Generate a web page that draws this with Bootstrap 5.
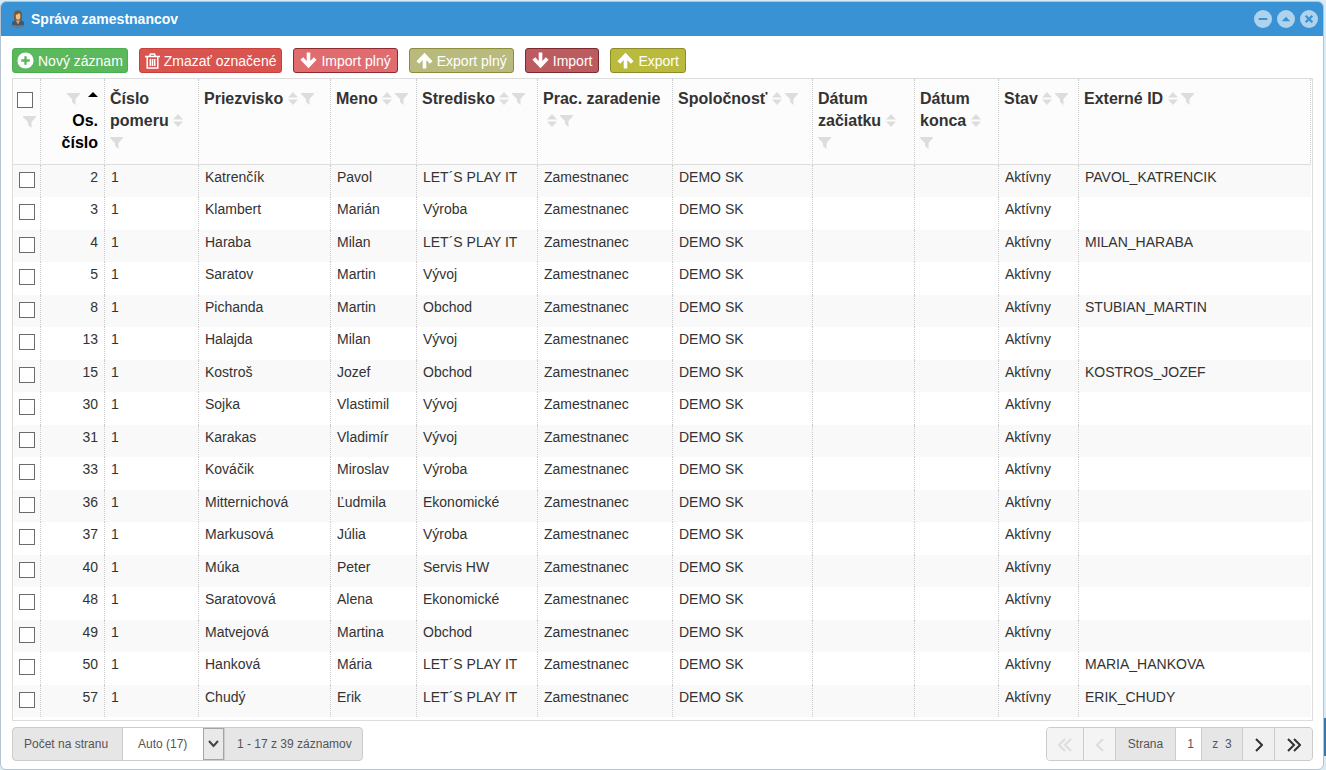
<!DOCTYPE html>
<html lang="sk">
<head>
<meta charset="utf-8">
<meta name="viewport" content="width=device-width, initial-scale=1">
<title>Správa zamestnancov</title>
<link href="https://cdn.jsdelivr.net/npm/bootstrap@5.3.0/dist/css/bootstrap.min.css" rel="stylesheet">
<style>
  body { font-family: "Liberation Sans", Arial, sans-serif; font-size: 14px; color: #333; background: #d8ecf5; }
  .desktop { min-height: 100vh; padding-top: 1px; }
  .desktop::after { content: ""; position: absolute; right: 0; bottom: 14px; width: 2px; height: 38px; background: #3a78a8; }
  .panel { border: 1px solid #b4c4d0; border-radius: 6px; background: #fff; margin: 0 2px 0 0; min-height: calc(100vh - 1px); overflow: hidden; }
  .titlebar { background: #3892d3; color: #fff; height: 34px; padding: 0 5px 0 10px; }
  .titlebar h1 { font-size: 14px; line-height: 20px; font-weight: 700; margin: 0 0 0 6px; }
  .win-btns { gap: 5px; }
  .win-btn { border: 0; padding: 0; background: none; line-height: 0; }
  .toolbar { padding: 12px 10px 5px 11px; gap: 11px; }
  .tool { display: inline-flex; align-items: center; gap: 4px; height: 25px; padding: 0 6px; border: 1px solid; border-radius: 3px; color: #fff; font-size: 14px; line-height: 20px; white-space: nowrap; }
  .t-new { background: #5cb85c; border-color: #4cae4c; padding: 0 4px; }
  .t-del { background: #d9534f; border-color: #c9403b; padding: 0 5px; }
  .t-impf { background: #e06c70; border-color: #8c2a2e; }
  .t-expf { background: #b9ba7d; border-color: #8c8c3c; }
  .t-imp { background: #bd5c60; border-color: #7c2a2e; }
  .t-exp { background: #babb3c; border-color: #8c8c2c; }
  .grid-box { margin: 0 10px 0 11px; border: 1px solid #ddd; padding: 0 1px 3px 0; }
  .grid { table-layout: fixed; width: 100%; border-collapse: separate; border-spacing: 0; }
  .grid th { font-size: 16px; line-height: 22px; height: 86px; padding: 9px 4px 0 5px; vertical-align: top; background: #fcfcfc; border-right: 1px dotted #ccc; border-bottom: 1px solid #ddd; color: #333; }
  .grid td { padding: 3px 5px 0 6px; line-height: 18px; height: 33px; vertical-align: top; border-right: 1px dotted #ccc; white-space: nowrap; overflow: hidden; }
  .grid tr:nth-child(odd) td { background: #f9f9f9; height: 32px; }
  .grid td:last-child { border-right: 0; }
  .grid .num { text-align: right; padding-right: 6px; }
  .grid th.num { color: #000; }
  .grid th.sel { padding: 13px 4px 0; }
  .tick { appearance: none; display: block; width: 16px; height: 16px; margin: 4px 0 0; border: 1px solid #6b6b6b; background: #fff; }
  th .tick { margin: 0 0 6px; }
  .tick:checked { background: #3892d3; }
  .ico { fill: #ddd; vertical-align: -1px; }
  .ico + .ico { margin-left: 3px; }
  .pager { padding: 6px 10px 8px 11px; font-size: 12px; color: #555; }
  .seg { display: inline-flex; height: 34px; border: 1px solid #ccc; border-radius: 4px; overflow: hidden; background: #e6e6e6; }
  .seg > * { display: flex; align-items: center; border: 0; border-right: 1px solid #ccc; }
  .seg > :last-child { border-right: 0; }
  .lbl-size { padding: 0 13px 0 11px; width: 110px; white-space: nowrap; }
  .total { padding: 0 10px 0 12px; }
  .lbl-page { width: 60px; justify-content: center; }
  .of { width: 41px; justify-content: center; }
  .size { position: relative; background: #fff; }
  .size select { appearance: none; border: 0; background: transparent; color: #555; width: 101px; height: 32px; padding: 0 0 0 15px; font-size: 12px; }
  .drop { position: absolute; right: 0; top: 0; bottom: 0; width: 21px; border: 1px solid #a5a5a5; background: #e9e9e9; pointer-events: none; }
  .page-no { width: 26px; background: #fff; color: #555; text-align: right; padding: 0 7px 0 0; }
  .nav-b { width: 32px; background: #f0f0f0; justify-content: center; padding: 2px 0 0; }
  .nav-b.wide { width: 37px; }
  .nav-b:disabled { background: #f4f4f4; }
</style>
</head>
<body>
<svg width="0" height="0" class="position-absolute" aria-hidden="true">
  <symbol id="funnel" viewBox="0 0 13 12"><path d="M0 0h13v1L8.500 6v6L5 9V6L0 1z"/></symbol>
  <symbol id="sort" viewBox="0 0 10 13"><path d="M5 0l5 5.500H0zM0 7.500h10L5 13z"/></symbol>
  <symbol id="down" viewBox="0 0 16 16"><path d="M6.300 .5h3.400v8L13 5l2.600 2.400L8 15.200 .4 7.400 3 5l3.300 3.500z"/></symbol>
  <symbol id="up" viewBox="0 0 16 16"><path d="M6.300 15.500h3.400v-8L13 11l2.600-2.400L8 .8 .4 8.600 3 11l3.300-3.500z"/></symbol>
</svg>
<div class="desktop position-relative">
<main class="panel">
  <header class="titlebar d-flex align-items-center">
    <svg width="14" height="18" viewBox="0 0 14 18"><path d="M1 16v-3q0-2 3-3h6q3 1 3 3v3q-6 3-12 0z" fill="#3f5878"/><path d="M1.500 15.500q5.500 2 11 0" fill="none" stroke="#777f84" stroke-width="1.500"/><path d="M4.500 10h5L7 14.500z" fill="#e0a060"/><path d="M3 9V4.500Q3 .5 7 .5t4 4V9l-1.500 1.500h-5z" fill="#7b5835"/><path d="M4.800 4.500Q7 5 8 3l1.300 1.500v3Q9 9.800 7 9.800T4.800 7.500z" fill="#efc08c"/></svg>
    <h1 class="flex-grow-1">Správa zamestnancov</h1>
    <div class="win-btns d-flex">
      <button class="win-btn" aria-label="Minimalizovať"><svg width="18" height="18" viewBox="0 0 19 19"><circle cx="9.500" cy="9.500" r="9.500" fill="#afd3ed"/><path d="M5 9.500h9" stroke="#3892d3" stroke-width="2.200"/></svg></button>
      <button class="win-btn" aria-label="Zbaliť"><svg width="18" height="18" viewBox="0 0 19 19"><circle cx="9.500" cy="9.500" r="9.500" fill="#afd3ed"/><path d="M5 12l4.500-5 4.500 5z" fill="#3892d3"/></svg></button>
      <button class="win-btn" aria-label="Zavrieť"><svg width="18" height="18" viewBox="0 0 19 19"><circle cx="9.500" cy="9.500" r="9.500" fill="#afd3ed"/><path d="M6 6l7 7m0-7l-7 7" stroke="#3892d3" stroke-width="2.400"/></svg></button>
    </div>
  </header>
  <div class="toolbar d-flex flex-wrap">
    <button class="tool t-new"><svg width="17" height="17" viewBox="0 0 16 16"><circle cx="8" cy="8" r="7.600" fill="#fff"/><path d="M8 4v8M4 8h8" stroke="#5cb85c" stroke-width="2.200"/></svg>Nový záznam</button>
    <button class="tool t-del"><svg width="15" height="16" viewBox="0 0 15 16" fill="none" stroke="#fff" stroke-width="1.500"><path d="M0 3.500h15M4.500 3.500L5.500 1h4l1 2.500M2.200 4v11h10.600V4M5.300 6v7M7.500 6v7M9.700 6v7"/></svg>Zmazať označené</button>
    <button class="tool t-impf"><svg width="17" height="17" fill="#fff"><use href="#down"/></svg>Import plný</button>
    <button class="tool t-expf"><svg width="17" height="17" fill="#fff"><use href="#up"/></svg>Export plný</button>
    <button class="tool t-imp"><svg width="17" height="17" fill="#fff"><use href="#down"/></svg>Import</button>
    <button class="tool t-exp"><svg width="17" height="17" fill="#fff"><use href="#up"/></svg>Export</button>
  </div>
  <div class="grid-box">
    <table class="grid">
      <colgroup><col style="width:28px"><col style="width:64px"><col style="width:94px"><col style="width:132px"><col style="width:86px"><col style="width:121px"><col style="width:135px"><col style="width:140px"><col style="width:102px"><col style="width:84px"><col style="width:80px"><col></colgroup>
      <thead><tr id="head"></tr></thead>
      <tbody id="rows"></tbody>
    </table>
  </div>
  <footer class="pager d-flex justify-content-between">
    <div class="seg">
      <label for="size" class="lbl-size">Počet na stranu</label>
      <div class="size"><select id="size"><option>Auto (17)</option></select><span class="drop d-flex align-items-center justify-content-center"><svg width="11" height="8" viewBox="0 0 11 8" fill="none" stroke="#444" stroke-width="2"><path d="M1 1l4.500 5L10 1"/></svg></span></div>
      <span class="total">1 - 17 z 39 záznamov</span>
    </div>
    <div class="seg">
      <button class="nav-b wide" disabled aria-label="Prvá"><svg width="14" height="14" viewBox="0 0 14 14" fill="none" stroke="#ddd" stroke-width="2"><path d="M7 1L1 7l6 6M13 1L7 7l6 6"/></svg></button>
      <button class="nav-b" disabled aria-label="Predošlá"><svg width="8" height="14" viewBox="0 0 8 14" fill="none" stroke="#ddd" stroke-width="2"><path d="M7 1L1 7l6 6"/></svg></button>
      <label for="page" class="lbl-page">Strana</label>
      <input id="page" class="page-no" value="1">
      <span class="of">z&nbsp; 3</span>
      <button class="nav-b" aria-label="Ďalšia"><svg width="8" height="14" viewBox="0 0 8 14" fill="none" stroke="#333" stroke-width="2"><path d="M1 1l6 6-6 6"/></svg></button>
      <button class="nav-b wide" aria-label="Posledná"><svg width="14" height="14" viewBox="0 0 14 14" fill="none" stroke="#333" stroke-width="2"><path d="M1 1l6 6-6 6M7 1l6 6-6 6"/></svg></button>
    </div>
  </footer>
</main>
</div>
<script src="https://cdn.jsdelivr.net/npm/bootstrap@5.3.0/dist/js/bootstrap.bundle.min.js"></script>
<script>
  const F = '<svg class="ico" width="13" height="12"><use href="#funnel"/></svg>';
  const S = '<svg class="ico" width="10" height="13"><use href="#sort"/></svg>';
  const both = `<span class="text-nowrap">${S}${F}</span>`;
  document.getElementById('head').innerHTML =
    `<th class="sel"><input type="checkbox" class="tick" aria-label="Označiť všetko"><div class="text-end lh-1">${F}</div></th>
     <th class="num">${F} <svg class="ms-1" width="10" height="5" viewBox="0 0 10 5" style="vertical-align:7px"><path d="M0 5l5-5 5 5z"/></svg><br>Os.<br>číslo</th>
     <th>Číslo<br>pomeru ${S}<br>${F}</th>
     <th>Priezvisko ${both}</th><th>Meno ${both}</th><th>Stredisko ${both}</th>
     <th>Prac. zaradenie<br>&nbsp;${both}</th><th>Spoločnosť ${both}</th>
     <th>Dátum<br>začiatku ${S}<br>${F}</th><th>Dátum<br>konca ${S}<br>${F}</th>
     <th>Stav ${both}</th><th>Externé ID ${both}</th>`;
  const people = [
    [2,'Katrenčík','Pavol','LET´S PLAY IT','PAVOL_KATRENCIK'],[3,'Klambert','Marián','Výroba',''],
    [4,'Haraba','Milan','LET´S PLAY IT','MILAN_HARABA'],[5,'Saratov','Martin','Vývoj',''],
    [8,'Pichanda','Martin','Obchod','STUBIAN_MARTIN'],[13,'Halajda','Milan','Vývoj',''],
    [15,'Kostroš','Jozef','Obchod','KOSTROS_JOZEF'],[30,'Sojka','Vlastimil','Vývoj',''],
    [31,'Karakas','Vladimír','Vývoj',''],[33,'Kováčik','Miroslav','Výroba',''],
    [36,'Mitternichová','Ľudmila','Ekonomické',''],[37,'Markusová','Júlia','Výroba',''],
    [40,'Múka','Peter','Servis HW',''],[48,'Saratovová','Alena','Ekonomické',''],
    [49,'Matvejová','Martina','Obchod',''],[50,'Hanková','Mária','LET´S PLAY IT','MARIA_HANKOVA'],
    [57,'Chudý','Erik','LET´S PLAY IT','ERIK_CHUDY']
  ];
  document.getElementById('rows').innerHTML = people.map(p =>
    `<tr><td class="sel"><input type="checkbox" class="tick" aria-label="Označiť ${p[1]}"></td><td class="num">${p[0]}</td><td>1</td><td>${p[1]}</td><td>${p[2]}</td><td>${p[3]}</td><td>Zamestnanec</td><td>DEMO SK</td><td></td><td></td><td>Aktívny</td><td>${p[4]}</td></tr>`).join('');
</script>
</body>
</html>
